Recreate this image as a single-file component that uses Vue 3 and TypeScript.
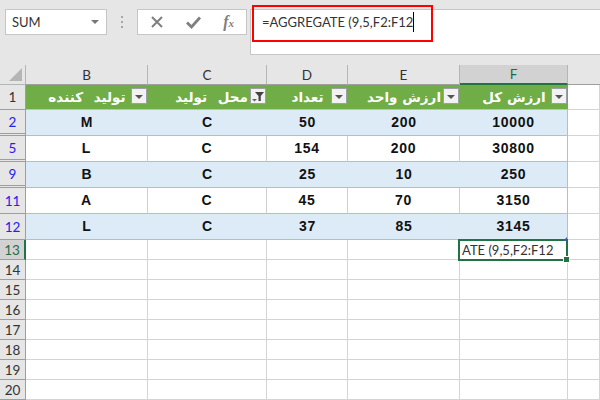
<script setup lang="ts">
interface Row { n: number; cells: string[]; gap: boolean }
const cols = ['B', 'C', 'D', 'E', 'F']
const heads = [
  { t: 'تولید کننده', f: false, wide: true },
  { t: 'محل تولید', f: true, wide: true },
  { t: 'تعداد', f: false, wide: false },
  { t: 'ارزش واحد', f: false, wide: false },
  { t: 'ارزش کل', f: false, wide: false },
]
const rows: Row[] = [
  { n: 2, cells: ['M', 'C', '50', '200', '10000'], gap: true },
  { n: 5, cells: ['L', 'C', '154', '200', '30800'], gap: true },
  { n: 9, cells: ['B', 'C', '25', '10', '250'], gap: true },
  { n: 11, cells: ['A', 'C', '45', '70', '3150'], gap: false },
  { n: 12, cells: ['L', 'C', '37', '85', '3145'], gap: false },
]
const empties = [14, 15, 16, 17, 18, 19, 20]
</script>

<template>
  <div class="app">
    <div class="bar">
      <div class="name"><span>SUM</span><i class="caret"></i></div>
      <div class="dots"><b></b><b></b><b></b></div>
      <div class="btns">
        <svg width="14" height="14" viewBox="0 0 14 14"><path d="M2 2 L12 12 M12 2 L2 12" stroke="#7f7f7f" stroke-width="2" fill="none"/></svg>
        <svg width="15" height="14" viewBox="0 0 15 14"><path d="M1 7.5 L5.5 12 L14 2.5" stroke="#7f7f7f" stroke-width="2.8" fill="none"/></svg>
        <span class="fx">f<sub>x</sub></span>
      </div>
      <div class="formula">
        <span class="ftext">=AGGREGATE (9,5,F2:F12</span><i class="cursor"></i>
        <div class="redbox"></div>
      </div>
    </div>
    <div class="sheet">
      <div class="corner"><i></i></div>
      <div v-for="c in cols" :key="c" class="colh" :class="{ sel: c === 'F' }">{{ c }}</div>
      <div class="colh last"></div>

      <div class="rowh">1</div>
      <div v-for="h in heads" :key="h.t" class="hd">
        <span class="hbtn">
          <svg v-if="h.f" width="13" height="11" viewBox="0 0 13 11"><path d="M3 1 H12 L8.8 5 V10 H6.5 V5 Z" fill="#444"/><path d="M0 8 H5 L2.5 10.5 Z" fill="#666"/></svg>
          <i v-else class="tri"></i>
        </span>
        <span class="htext" :class="{ shifted: h.f, wide: h.wide }" dir="rtl">{{ h.t }}</span>
      </div>
      <div class="cell"></div>

      <template v-for="(r, i) in rows" :key="r.n">
        <div class="rowh blue" :class="{ gap: r.gap }">{{ r.n }}</div>
        <div v-for="(v, j) in r.cells" :key="j" class="td" :class="{ odd: i % 2 === 0, lastcol: j === 4 }">{{ v }}</div>
        <div class="cell tall"></div>
      </template>

      <div class="rowh small active">13</div>
      <div class="cell small"></div>
      <div class="cell small"></div>
      <div class="cell small"></div>
      <div class="cell small"></div>
      <div class="cell small activecell">
        <span class="edit">ATE (9,5,F2:F12</span>
        <i class="handle"></i>
        <i class="tblhandle"></i>
      </div>
      <div class="cell small"></div>

      <template v-for="n in empties" :key="n">
        <div class="rowh small">{{ n }}</div>
        <div v-for="k in 6" :key="k" class="cell small"></div>
      </template>
    </div>
  </div>
</template>

<style>
html, body { margin: 0; padding: 0; background: #fff; overflow: hidden; }
</style>

<style scoped>
.app {
  width: 600px;
  height: 400px;
  overflow: hidden;
  font-family: "Lato", "Liberation Sans", sans-serif;
  color: #222;
  background: #e6e6e6;
}
.bar {
  height: 65px;
  box-sizing: border-box;
  display: flex;
  align-items: flex-start;
  padding: 9px 0 0 5px;
  background: #e6e6e6;
}
.name {
  width: 102px;
  height: 26px;
  box-sizing: border-box;
  border: 1px solid #c6c6c6;
  background: #fff;
  display: flex;
  align-items: center;
  justify-content: space-between;
  padding: 0 7px 0 6px;
  font-size: 13px;
  color: #333;
}
.caret {
  border-left: 4px solid transparent;
  border-right: 4px solid transparent;
  border-top: 4px solid #777;
}
.dots {
  width: 30px;
  display: flex;
  flex-direction: column;
  align-items: center;
  gap: 3px;
  padding-top: 7px;
}
.dots b { width: 2px; height: 2px; background: #a6a6a6; }
.btns {
  width: 110px;
  height: 26px;
  box-sizing: border-box;
  border: 1px solid #c6c6c6;
  background: #fff;
  display: flex;
  align-items: center;
  justify-content: space-between;
  padding: 0 12px 0 12px;
}
.fx {
  font-family: "Liberation Serif", serif;
  font-style: italic;
  font-weight: 700;
  font-size: 16px;
  color: #7f7f7f;
  line-height: 16px;
}
.fx sub { font-size: 11px; vertical-align: baseline; }
.formula {
  position: relative;
  margin-left: 3px;
  flex: 1;
  height: 46px;
  box-sizing: border-box;
  border: 1px solid #c6c6c6;
  border-right: 0;
  background: #fff;
  padding: 2px 0 0 11px;
  font-size: 13px;
  line-height: 20px;
  color: #333;
  display: flex;
  align-items: flex-start;
}
.cursor { width: 1px; height: 20px; background: #000; }
.redbox {
  position: absolute;
  left: 1px;
  top: -5px;
  width: 181px;
  height: 37px;
  box-sizing: border-box;
  border: 2px solid #f00;
}
.sheet {
  display: grid;
  grid-template-columns: 26px 122px 119px 81px 112px 108px 1fr;
  grid-template-rows: 20px 25px repeat(5, 26px) repeat(8, 20px);
  background: #fff;
}
.corner {
  background: #e6e6e6;
  border-right: 1px solid #b5b5b5;
  border-bottom: 1px solid #b5b5b5;
  box-sizing: border-box;
  position: relative;
}
.corner i {
  position: absolute;
  right: 3px;
  bottom: 3px;
  border-left: 13px solid transparent;
  border-bottom: 13px solid #b5b5b5;
}
.colh {
  background: #e6e6e6;
  border-right: 1px solid #b5b5b5;
  border-bottom: 1px solid #9e9e9e;
  box-sizing: border-box;
  display: flex;
  align-items: center;
  justify-content: center;
  font-size: 13.5px;
  color: #333;
}
.colh.last { border-right: 0; }
.colh.sel {
  background: #d2d2d2;
  color: #1f6e43;
  border-bottom: 2px solid #217346;
}
.rowh {
  background: #e6e6e6;
  border-right: 1px solid #9e9e9e;
  border-bottom: 1px solid #9e9e9e;
  box-sizing: border-box;
  display: flex;
  align-items: center;
  justify-content: center;
  font-size: 13.5px;
  color: #333;
}
.rowh.blue { color: #2222ee; }
.rowh.gap { border-bottom: 3px double #9e9e9e; }
.rowh.active {
  background: #d2d2d2;
  color: #1f6e43;
  border-right: 2px solid #217346;
}
.hd {
  background: #70ad47;
  border-bottom: 1px solid #a9c4e0;
  box-sizing: border-box;
  display: flex;
  align-items: center;
  justify-content: center;
  position: relative;
}
.htext {
  color: #fff;
  font-family: "DejaVu Sans", sans-serif;
  font-weight: 700;
  font-size: 13.5px;
  white-space: nowrap;
}
.htext.wide { word-spacing: 6px; }
.htext.shifted { margin-left: 8px; }
.hbtn {
  position: absolute;
  right: 1px;
  top: 3px;
  width: 16px;
  height: 16px;
  box-sizing: border-box;
  background: #f2f2f2;
  border: 1px solid #9aa0a6;
  display: flex;
  align-items: center;
  justify-content: center;
}
.tri {
  border-left: 4px solid transparent;
  border-right: 4px solid transparent;
  border-top: 4px solid #555;
  margin-top: 1px;
}
.td {
  box-sizing: border-box;
  display: flex;
  align-items: center;
  justify-content: center;
  font-family: "Liberation Sans", sans-serif;
  font-weight: 700;
  font-size: 14px;
  letter-spacing: 0.7px;
  color: #111;
  border-bottom: 1px solid #a4c2e0;
  border-right: 1px solid #d0d0d0;
  background: #fff;
  padding-bottom: 1px;
}
.td.odd { background: #ddebf7; border-right: 0; }
.td.lastcol { border-right: 1px solid #a4c2e0; }
.cell {
  box-sizing: border-box;
  border-right: 1px solid #d4d4d4;
  border-bottom: 1px solid #d4d4d4;
  background: #fff;
}
.activecell {
  position: relative;
  border: 2px solid #217346;
  margin: -1px 0 -1px -2px;
  display: flex;
  align-items: center;
  padding-left: 2px;
  font-size: 13px;
  color: #333;
  z-index: 2;
}
.edit { white-space: nowrap; }
.handle {
  position: absolute;
  right: -4px;
  bottom: -4px;
  width: 5px;
  height: 5px;
  background: #217346;
  border: 1px solid #fff;
}
.tblhandle {
  position: absolute;
  right: -1px;
  top: -4px;
  border-left: 4px solid transparent;
  border-bottom: 4px solid #3f5fa8;
}
</style>
